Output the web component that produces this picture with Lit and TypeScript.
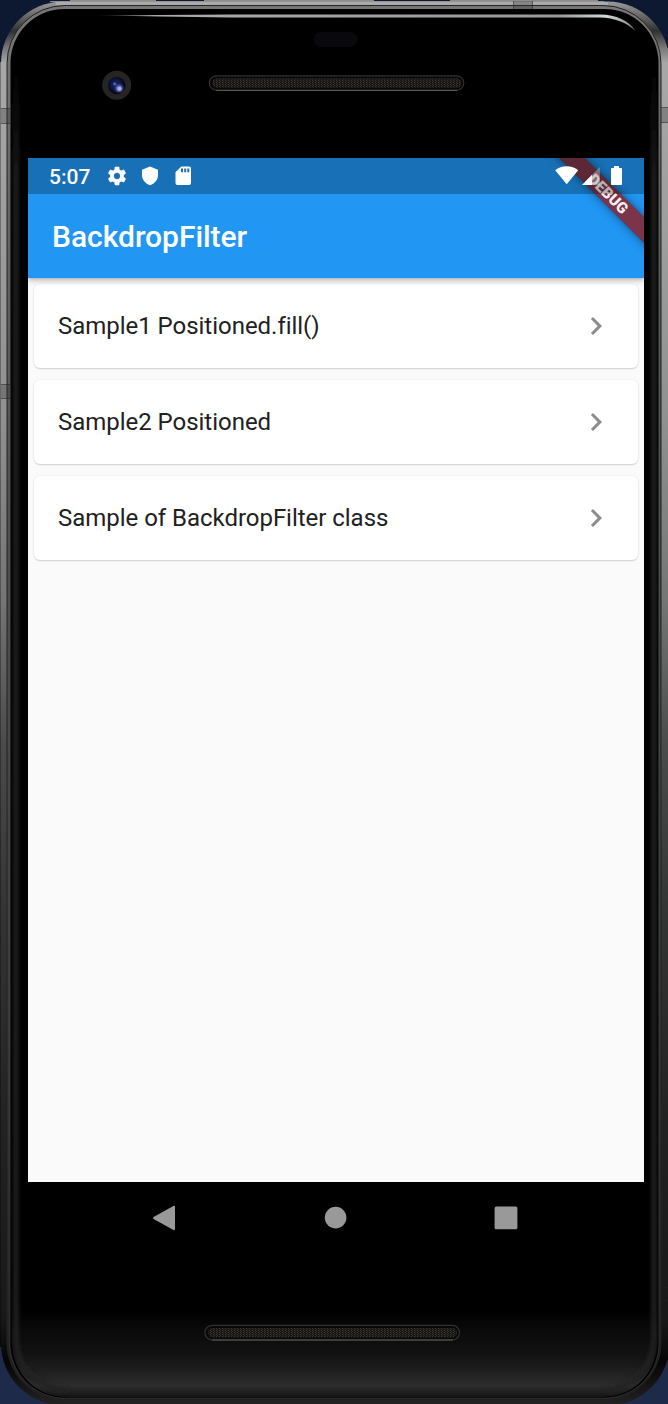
import { LitElement, html, css, svg } from "lit";
import { customElement, property } from "lit/decorators.js";

@customElement("phone-frame")
class PhoneFrame extends LitElement {
  static styles = css`
    :host { display: block; width: 668px; height: 1404px; }
    svg { display: block; }
  `;
  private grille(x: number, y: number) {
    return svg`
      <rect x=${x} y=${y} width="254.5" height="14.5" rx="7.2" fill="#080808" stroke="#303030" stroke-width="1.2"/>
      <path d="M${x + 7} ${y + 14.6}H${x + 248}" stroke="#5b5b59" stroke-width="1"/>
      <rect x=${x + 3} y=${y + 2.5} width="249" height="9.5" rx="4.7" fill="url(#mesh)"/>`;
  }
  render() {
    return html`<svg width="668" height="1404" viewBox="0 0 668 1404">
      <defs>
        <linearGradient id="metal" x1="0" y1="0" x2="0" y2="1404" gradientUnits="userSpaceOnUse">
          <stop offset="0" stop-color="#a0a0a0"/><stop offset=".012" stop-color="#666"/>
          <stop offset=".022" stop-color="#303030"/><stop offset=".034" stop-color="#777"/>
          <stop offset=".045" stop-color="#a8a8a8"/><stop offset=".3" stop-color="#8f9191"/>
          <stop offset=".43" stop-color="#737474"/><stop offset=".53" stop-color="#4a4c4b"/>
          <stop offset=".65" stop-color="#333534"/><stop offset=".8" stop-color="#222"/>
          <stop offset=".94" stop-color="#181818"/><stop offset=".97" stop-color="#050505"/>
          <stop offset="1" stop-color="#222"/>
        </linearGradient>
        <linearGradient id="rim" x1="0" y1="0" x2="0" y2="1404" gradientUnits="userSpaceOnUse">
          <stop offset="0" stop-color="#777"/><stop offset=".3" stop-color="#555"/>
          <stop offset=".7" stop-color="#3a3a3a"/><stop offset="1" stop-color="#1c1c1c"/>
        </linearGradient>
        <linearGradient id="chin" x1="0" y1="1310" x2="0" y2="1397" gradientUnits="userSpaceOnUse">
          <stop offset="0" stop-color="#2b2b2b" stop-opacity="0"/><stop offset=".5" stop-color="#202020" stop-opacity=".55"/>
          <stop offset=".87" stop-color="#2d2d2d"/><stop offset="1" stop-color="#141414"/>
        </linearGradient>
        <linearGradient id="shine" x1="90" y1="0" x2="640" y2="0" gradientUnits="userSpaceOnUse">
          <stop offset="0" stop-color="#999" stop-opacity="0"/><stop offset=".12" stop-color="#aaa"/>
          <stop offset=".85" stop-color="#98999d"/><stop offset=".94" stop-color="#d0d8d8"/><stop offset="1" stop-color="#777"/>
        </linearGradient>
        <linearGradient id="side" x1="0" y1="60" x2="0" y2="180" gradientUnits="userSpaceOnUse">
          <stop offset="0" stop-color="#222" stop-opacity="0"/><stop offset="1" stop-color="#222"/>
        </linearGradient>
        <radialGradient id="lens" cx=".45" cy=".45" r=".55">
          <stop offset="0" stop-color="#1b2d70"/><stop offset=".6" stop-color="#0d1538"/><stop offset="1" stop-color="#04040a"/>
        </radialGradient>
        <pattern id="mesh" width="3" height="2" patternUnits="userSpaceOnUse">
          <rect width="3" height="2" fill="#171614"/><rect width="1" height="1" fill="#3b3933"/><rect x="1" y="1" width="1" height="1" fill="#2e2c27"/>
        </pattern>
        <filter id="soft" x="-30%" y="-30%" width="160%" height="160%"><feGaussianBlur stdDeviation="1.2"/></filter>
        <filter id="edge" x="0" y="0" width="668" height="1404" filterUnits="userSpaceOnUse"><feGaussianBlur stdDeviation="2"/></filter>
      </defs>
      <rect width="668" height="700" fill="#0c1931"/>
      <rect y="700" width="668" height="704" fill="#1e2a49"/>
      <rect y="62" width="3" height="1285" fill="url(#metal)"/>
      <rect x="665" y="48" width="3" height="1312" fill="url(#metal)"/>
      <path d="M70 .5H156M204 .5H374M450 .5H598M50 1.5H604" stroke="#8c8c8c"/>
      <rect x="1" y="1.5" width="668.5" height="1404" rx="62" fill="url(#metal)"/>
      <path d="M56 3.5H608" stroke="#aaa" stroke-width="3"/>
      <path d="M.5 62V1347" stroke="#000" stroke-opacity=".3"/>
      <rect x="7" y="5.5" width="654" height="1395" rx="58" fill="url(#rim)" stroke="#222"/>
      <rect x="9.3" y="7.7" width="649.9" height="1391" rx="56" fill="none" stroke="#777" stroke-opacity=".2"/>
      <rect x="10.5" y="9" width="648" height="1388.5" rx="54" fill="#000"/>
      <rect x="12" y="1310" width="645" height="87" fill="url(#chin)" clip-path="inset(0 0 0 0 round 0 0 54px 54px)"/>
      <path d="M16 60V1340Q19 1385 68 1391" fill="none" stroke="url(#side)" stroke-width="5" filter="url(#edge)"/>
      <path d="M654 60V1340Q650 1385 604 1391" fill="none" stroke="url(#side)" stroke-width="5" filter="url(#edge)"/>
      <path d="M90 15.2Q160 15 230 14.5H600Q625 15 635.5 31Q622 18 600 17.5H230Q160 16.5 90 15.2Z" fill="url(#shine)"/>
      <path d="M513.5 1V9M532.5 1V9M1 108.5H10M1 123.5H10M661 107.5H668M661 122.5H668M1 384.5H11M1 398.5H11M661 1287.5H668M661 1300.5H668M109.5 1400V1404M128.5 1400V1404M543.5 1400V1404M562.5 1400V1404" stroke="#222" stroke-opacity=".6"/>
      <path d="M514 1H532V9H514ZM1 109H10V123H1ZM661 108H668V122H661ZM1 385H11V398H1Z" fill="#333" fill-opacity=".3"/>
      <rect x="313.5" y="32" width="44" height="15" rx="7.5" fill="#08080d"/>
      <circle cx="116.7" cy="85.3" r="14.5" fill="#262425"/>
      <circle cx="116.7" cy="85.5" r="8.7" fill="url(#lens)"/>
      <circle cx="119.3" cy="88.5" r="3.3" fill="#7788df" filter="url(#soft)"/>
      <circle cx="119.5" cy="88.7" r="2" fill="#a3b1f8"/>
      <circle cx="114.6" cy="83.9" r="1.4" fill="#5068bd"/>
      ${this.grille(209.3, 75.8)}
      ${this.grille(205, 1325.4)}
    </svg>`;
  }
}

@customElement("status-bar")
class StatusBar extends LitElement {
  static styles = css`
    :host { display: flex; height: 36px; box-sizing: border-box; padding: 0 20px 0 21px; align-items: center; color: #fff; background: rgba(0, 0, 0, .25); font: 500 21px/36px Roboto, sans-serif; }
    .time { width: 57px; padding-top: 1px; }
    .left { display: flex; gap: 11px; }
    .right { margin-left: auto; display: flex; }
    svg { display: block; fill: #fff; }
  `;
  render() {
    return html`
      <span class="time">5:07</span>
      <div class="left">
        <svg width="22" height="22" viewBox="0 0 24 24"><path d="M19.43 12.98c.04-.32.07-.64.07-.98s-.03-.66-.07-.98l2.11-1.65c.19-.15.24-.42.12-.64l-2-3.46c-.12-.22-.39-.3-.61-.22l-2.49 1c-.52-.4-1.08-.73-1.69-.98l-.38-2.65C14.46 2.18 14.25 2 14 2h-4c-.25 0-.46.18-.49.42l-.38 2.65c-.61.25-1.17.59-1.69.98l-2.49-1c-.23-.09-.49 0-.61.22l-2 3.46c-.13.22-.07.49.12.64l2.11 1.65c-.04.32-.07.65-.07.98s.03.66.07.98l-2.11 1.65c-.19.15-.24.42-.12.64l2 3.46c.12.22.39.3.61.22l2.49-1c.52.4 1.08.73 1.69.98l.38 2.65c.03.24.24.42.49.42h4c.25 0 .46-.18.49-.42l.38-2.65c.61-.25 1.17-.59 1.69-.98l2.49 1c.23.09.49 0 .61-.22l2-3.46c.12-.22.07-.49-.12-.64l-2.11-1.65zM12 15.5c-1.93 0-3.5-1.57-3.5-3.5s1.57-3.5 3.5-3.5 3.5 1.57 3.5 3.5-1.57 3.5-3.5 3.5z"/></svg>
        <svg width="22" height="22" viewBox="0 0 22 22"><path d="M11 1.5 19 4.7V10C19 14.8 15.6 18.8 11 20.2 6.4 18.8 3 14.8 3 10V4.7Z"/></svg>
        <svg width="22" height="22" viewBox="0 0 22 22"><path fill-rule="evenodd" d="M9.2 1.6H17.2Q19 1.6 19 3.4V18Q19 20 17.2 20H5.3Q3.5 20 3.5 18V7.3ZM9 3.6V7.3H11V3.6ZM12.2 3.6V7.3H14.2V3.6ZM15.3 3.6V7.3H17.3V3.6Z"/></svg>
      </div>
      <div class="right">
        <svg width="69" height="22" viewBox="555 165 69 22">
          <path d="M555.2 170.2Q560 166.2 566.7 166.2T578.2 170.2L566.7 184.2Z"/>
          <path d="M599.8 167V185H582Z" fill-opacity=".3"/>
          <path d="M592 174.8V185H582Z"/>
          <path d="M614 166H619V168H621.2Q622 168 622 168.8V184.2Q622 185 621.2 185H611.8Q611 185 611 184.2V168.8Q611 168 611.8 168H614Z"/>
        </svg>
      </div>`;
  }
}

@customElement("list-card")
class ListCard extends LitElement {
  @property() label = "";
  static styles = css`
    :host { display: flex; box-sizing: border-box; height: 83.5px; padding: .5px 24px 0; align-items: center; justify-content: space-between; border-radius: 6px; background: #fff; box-shadow: 0 1px 1.5px rgba(0, 0, 0, .15), 0 0 2px rgba(0, 0, 0, .08); font: 400 24px/36px Roboto, sans-serif; letter-spacing: -.03px; color: #212121; }
    svg { display: block; fill: #8c8c8c; }
  `;
  render() {
    return html`<span>${this.label}</span>
      <svg width="36" height="36" viewBox="0 0 24 24"><path d="M10 6 8.59 7.41 13.17 12l-4.58 4.59L10 18l6-6z"/></svg>`;
  }
}

@customElement("app-root")
class AppRoot extends LitElement {
  static styles = css`
    :host { display: grid; width: 668px; height: 1404px; overflow: hidden; }
    phone-frame, .device { grid-area: 1 / 1; }
    .device { box-sizing: border-box; z-index: 1; padding: 158px 24px 0 28px; }
    .screen { height: 1024px; overflow: hidden; display: flex; flex-direction: column; background: #fafafa; }
    .header { position: relative; z-index: 1; background: #2196f3; box-shadow: 0 3px 6px rgba(0, 0, 0, .2), 0 1px 3px rgba(0, 0, 0, .12); }
    status-bar { position: relative; z-index: 2; }
    .title { height: 84px; padding: 1px 24px 0; box-sizing: border-box; color: #fff; font: 500 30px/84px Roboto, sans-serif; letter-spacing: -.03px; }
    .clip { position: absolute; inset: 0; overflow: hidden; }
    .banner { position: absolute; right: -64px; top: 27px; width: 200px; height: 18px; transform: rotate(45deg); background: linear-gradient(rgba(183, 28, 28, .63), rgba(183, 28, 28, .63)), rgba(0, 0, 0, .38); box-shadow: 0 0 9px rgba(0, 0, 0, .5); text-align: center; color: #f4eeee; font: 900 15.3px/18px Roboto, sans-serif; }
    .list { display: flex; flex-direction: column; gap: 12.5px; padding: 6px; }
    .nav { height: 72px; }
    .nav svg { display: block; fill: #999; }
  `;
  render() {
    return html`
      <phone-frame></phone-frame>
      <div class="device">
        <div class="screen">
          <div class="header">
            <div class="clip"><div class="banner">DEBUG</div></div>
            <status-bar></status-bar>
            <div class="title">BackdropFilter</div>
          </div>
          <div class="list">
            ${["Sample1 Positioned.fill()", "Sample2 Positioned", "Sample of BackdropFilter class"].map(
              (t) => html`<list-card label=${t}></list-card>`
            )}
          </div>
        </div>
        <div class="nav">
          <svg width="616" height="72" viewBox="28 1182 616 72">
            <path d="M153.6 1217 173.4 1206Q175 1205.4 175 1207V1229Q175 1230.6 173.4 1230L153.6 1219Q152.2 1218 153.6 1217Z"/>
            <circle cx="335.6" cy="1217.6" r="10.8"/>
            <rect x="494.6" y="1206.5" width="22.8" height="22.8" rx="1.5"/>
          </svg>
        </div>
      </div>`;
  }
}
